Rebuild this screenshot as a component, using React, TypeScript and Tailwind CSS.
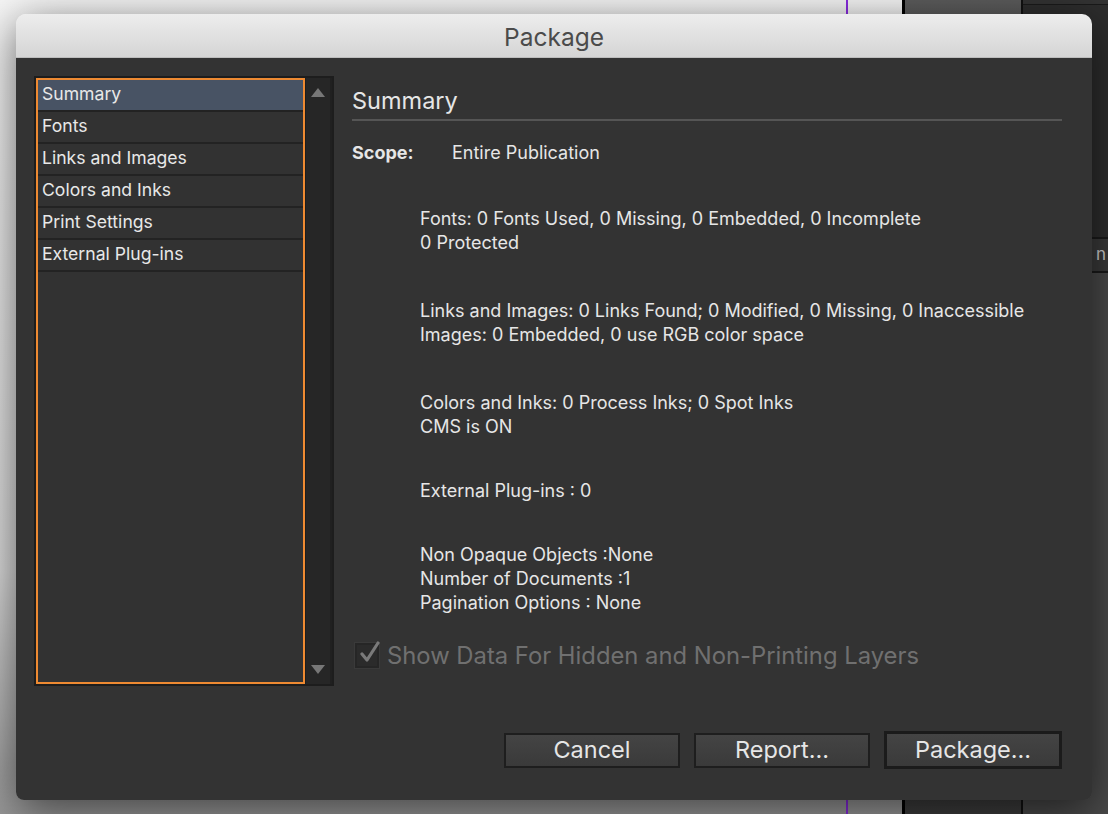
import React from 'react';

const font = { fontFamily: 'Inter, "Noto Sans", sans-serif' };

const listItems = ['Summary', 'Fonts', 'Links and Images', 'Colors and Inks', 'Print Settings', 'External Plug-ins'];

const sections: { lines: string[]; gap: string }[] = [
  { lines: ['Fonts: 0 Fonts Used, 0 Missing, 0 Embedded, 0 Incomplete', '0 Protected'], gap: 'mt-0' },
  { lines: ['Links and Images: 0 Links Found; 0 Modified, 0 Missing, 0 Inaccessible', 'Images: 0 Embedded, 0 use RGB color space'], gap: 'mt-[44px]' },
  { lines: ['Colors and Inks: 0 Process Inks; 0 Spot Inks', 'CMS is ON'], gap: 'mt-[44px]' },
  { lines: ['External Plug-ins : 0'], gap: 'mt-[40px]' },
  { lines: ['Non Opaque Objects :None', 'Number of Documents :1', 'Pagination Options : None'], gap: 'mt-[40px]' },
];

const Triangle: React.FC<{ up?: boolean }> = ({ up }) => (
  <svg width="14" height="9" viewBox="0 0 14 9">
    {up ? <polygon points="7,0 14,9 0,9" fill="#777" /> : <polygon points="0,0 14,0 7,9" fill="#777" />}
  </svg>
);

const DialogButton: React.FC<{ label: string; primary?: boolean }> = ({ label, primary }) => (
  <button
    className={
      primary
        ? 'w-[178px] h-[38px] border-[3px] border-[#1b1b1b] bg-gradient-to-b from-[#444] to-[#3a3a3a] text-[23.5px] text-[#e6e6e6] flex items-center justify-center'
        : 'w-[176px] h-[35px] border-2 border-[#1e1e1e] bg-gradient-to-b from-[#444] to-[#3a3a3a] text-[23.5px] text-[#e6e6e6] flex items-center justify-center'
    }
    style={font}
  >
    {label}
  </button>
);

export default function App() {
  return (
    <div className="relative w-[1108px] h-[814px] overflow-hidden flex bg-[#f5f5f5]">
      {/* desktop behind the dialog */}
      <div className="w-[846px] h-full bg-gradient-to-b from-[#f6f6f6] via-[#dcdcdc] via-70% to-[#999]" />
      <div className="w-[2px] h-full bg-[#8a2be2]" />
      <div className="w-[54px] h-full bg-gradient-to-b from-[#f6f6f6] via-[#dcdcdc] via-70% to-[#999]" />
      <div className="w-[3px] h-full bg-black" />
      <div className="w-[116px] h-full bg-gradient-to-b from-[#5c5c5c] to-[#3d3d3d]" />
      <div className="w-[2px] h-full bg-[#111]" />
      <div className="flex-1 h-full flex flex-col bg-[#2d2d2d]">
        <div className="h-[5px] border-b border-[#1a1a1a] bg-[#333]" />
        <div className="h-[232px]" />
        <div className="h-[36px] bg-[#3a3a3a] border-y-2 border-[#1a1a1a] flex items-center justify-end pr-[2px] text-[17px] text-[#d0d0d0]" style={font}>
          n
        </div>
        <div className="flex-1 bg-[#4a4a4a]" />
      </div>

      {/* dialog window */}
      <div className="absolute left-[16px] top-[14px] w-[1076px] h-[786px] rounded-t-[10px] rounded-b-[8px] overflow-hidden flex flex-col shadow-[0_10px_45px_rgba(0,0,0,0.6)]">
        <div className="h-[44px] shrink-0 pt-[3px] bg-gradient-to-b from-[#ededed] to-[#d5d5d5] border-b border-[#bdbdbd] flex items-center justify-center">
          <span className="text-[24.5px] text-[#4b4b4b]" style={font}>Package</span>
        </div>

        <div className="flex-1 bg-[#333333] flex flex-col pt-[18px] pl-[18px] pr-[30px] pb-[31px]">
          <div className="flex">
            {/* left list */}
            <div className="w-[300px] h-[610px] shrink-0 bg-[#1d1d1d] p-[2px] flex gap-[1px]">
              <div className="w-[269px] h-full border-2 border-[#ee8a32] bg-[#323232] flex flex-col" style={font}>
                {listItems.map((item, i) => (
                  <div
                    key={item}
                    className={
                      i === 0
                        ? 'h-[32px] pl-[4px] pb-[1px] flex items-center text-[17.6px] text-[#e8e8e8] bg-[#485364] border-b-2 border-[#222]'
                        : 'h-[32px] pl-[4px] pb-[1px] flex items-center text-[17.6px] text-[#e8e8e8] border-b-2 border-[#232323]'
                    }
                  >
                    {item}
                  </div>
                ))}
              </div>
              <div className="flex-1 h-full bg-[#262626] border-r-2 border-[#202020] flex flex-col items-center justify-between pt-[10px] pb-[10px]">
                <Triangle up />
                <Triangle />
              </div>
            </div>

            {/* right content */}
            <div className="flex-1 ml-[18px] flex flex-col" style={font}>
              <div className="h-[45px] flex items-end pb-[1px] border-b-2 border-[#555] text-[23.5px] text-[#e6e6e6]">
                Summary
              </div>
              <div className="mt-[19px] flex items-center h-[24px] text-[18px] text-[#e6e6e6]">
                <span className="w-[100px] font-bold">Scope:</span>
                <span>Entire Publication</span>
              </div>
              <div className="pl-[68px] pt-[43px] flex flex-col text-[18px] text-[#e6e6e6]">
                {sections.map((s, i) => (
                  <div key={i} className={'flex flex-col ' + s.gap}>
                    {s.lines.map((l) => (
                      <div key={l} className="h-[24px] leading-[24px]">{l}</div>
                    ))}
                  </div>
                ))}
              </div>
              <div className="mt-[23px] flex items-center gap-[8px] pl-[3px]">
                <div className="relative w-[24px] h-[25px] bg-[#2b2b2b] border-2 border-[#262626] shadow-[0_0_0_1px_#3a3a3a]">
                  <svg className="absolute -top-[4px] left-[2px]" width="22" height="24" viewBox="0 0 22 24">
                    <path d="M3 13 L8 19 L19 2" fill="none" stroke="#7a7a7a" strokeWidth="3.2" strokeLinecap="round" strokeLinejoin="round" />
                  </svg>
                </div>
                <span className="text-[23.8px] text-[#707070]">Show Data For Hidden and Non-Printing Layers</span>
              </div>
            </div>
          </div>

          <div className="mt-auto flex justify-end items-center gap-[14px]">
            <DialogButton label="Cancel" />
            <DialogButton label="Report..." />
            <DialogButton label="Package..." primary />
          </div>
        </div>
      </div>
    </div>
  );
}
